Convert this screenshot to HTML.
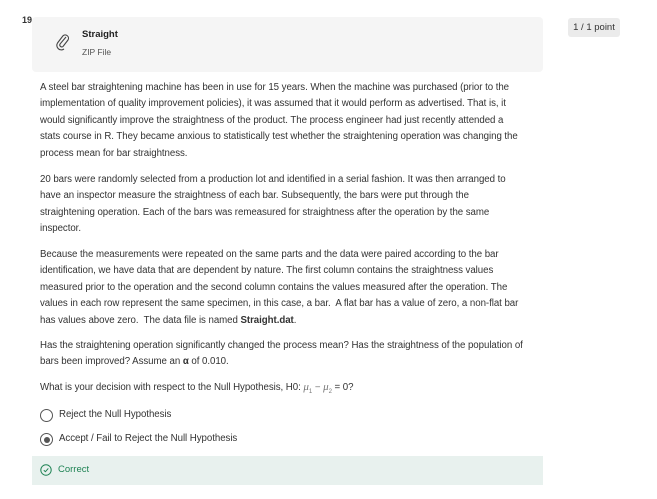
<!DOCTYPE html>
<html><head><meta charset="utf-8"><style>
body{margin:0;width:657px;height:499px;background:#fff;font-family:"Liberation Sans",sans-serif;color:#333;position:relative;overflow:hidden}
.a{position:absolute;white-space:nowrap}
.t{font-size:9.7px;line-height:16.4px;left:40px;letter-spacing:-0.05px}
.box{position:absolute;left:32px;top:17px;width:511px;height:55px;background:#f5f5f5;border-radius:4px}
.badge{position:absolute;left:568px;top:18px;width:52px;height:19px;background:#ebebeb;border-radius:3px;font-size:9.5px;line-height:19px;text-align:center;color:#333}
.radio{position:absolute;left:40px;width:11px;height:11px;border:1.3px solid #555;border-radius:50%}
.corr{position:absolute;left:32px;top:456px;width:511px;height:29px;background:#e8f1ee}
</style></head><body>
<div class="a" style="left:22px;top:15px;font-size:9px;font-weight:bold;color:#333">19.</div>
<div class="box"></div>
<svg class="a" style="left:55px;top:33px" width="16" height="18" viewBox="0 0 16 18"><path d="M11 4 L5 11 a2 2 0 0 0 3 2.5 L13 7 a3.3 3.3 0 0 0 -5 -4.2 L2.5 10 a4.5 4.5 0 0 0 6.5 6" fill="none" stroke="#444" stroke-width="1.1"/></svg>
<div class="a" style="left:82px;top:29px;font-size:9.5px;font-weight:bold;color:#222">Straight</div>
<div class="a" style="left:82px;top:47px;font-size:8.5px;color:#555">ZIP File</div>
<div class="badge">1 / 1 point</div>
<div class="a t" style="top:80px">A steel bar straightening machine has been in use for 15 years. When the machine was purchased (prior to the<br>implementation of quality improvement policies), it was assumed that it would perform as advertised. That is, it<br>would significantly improve the straightness of the product. The process engineer had just recently attended a<br>stats course in R. They became anxious to statistically test whether the straightening operation was changing the<br>process mean for bar straightness.</div>
<div class="a t" style="top:172px">20 bars were randomly selected from a production lot and identified in a serial fashion. It was then arranged to<br>have an inspector measure the straightness of each bar. Subsequently, the bars were put through the<br>straightening operation. Each of the bars was remeasured for straightness after the operation by the same<br>inspector.</div>
<div class="a t" style="top:247px">Because the measurements were repeated on the same parts and the data were paired according to the bar<br>identification, we have data that are dependent by nature. The first column contains the straightness values<br>measured prior to the operation and the second column contains the values measured after the operation. The<br>values in each row represent the same specimen, in this case, a bar.&nbsp; A flat bar has a value of zero, a non-flat bar<br>has values above zero.&nbsp; The data file is named <b>Straight.dat</b>.</div>
<div class="a t" style="top:338px">Has the straightening operation significantly changed the process mean? Has the straightness of the population of<br>bars been improved? Assume an <b>α</b> of 0.010.</div>
<div class="a t" style="top:379px">What is your decision with respect to the Null Hypothesis, H0: <i style="font-family:'Liberation Serif',serif;color:#777;font-size:11px">μ</i><sub style="font-size:6px;color:#777">1</sub> <span style="color:#777">−</span> <i style="font-family:'Liberation Serif',serif;color:#777;font-size:11px">μ</i><sub style="font-size:6px;color:#777">2</sub> = 0?</div>
<div class="radio" style="top:409px"></div>
<div class="a t" style="left:59px;top:407px">Reject the Null Hypothesis</div>
<div class="radio" style="top:433px"><div style="position:absolute;left:2.5px;top:2.5px;width:6px;height:6px;border-radius:50%;background:#555"></div></div>
<div class="a t" style="left:59px;top:431px">Accept / Fail to Reject the Null Hypothesis</div>
<div class="corr"></div>
<svg class="a" style="left:40px;top:464px" width="12" height="12" viewBox="0 0 12 12"><circle cx="6" cy="6" r="5.2" fill="none" stroke="#1f8354" stroke-width="1"/><path d="M3.8 6.2 L5.4 7.7 L8.3 4.4" fill="none" stroke="#1f8354" stroke-width="1"/></svg>
<div class="a" style="left:58px;top:462px;font-size:9.5px;line-height:16px;color:#1f8354">Correct</div>
</body></html>
